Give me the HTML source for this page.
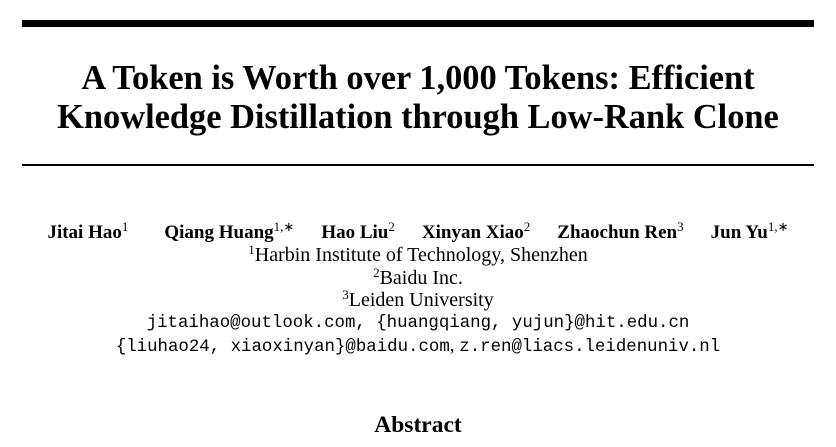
<!DOCTYPE html>
<html><head><meta charset="utf-8"><style>
body{margin:0;width:836px;height:447px;background:#fff;font-family:"Liberation Serif",serif;color:#000;position:relative;overflow:hidden}
.r{position:absolute;left:22px;width:792px;background:#000}
.c{position:absolute;left:0;width:836px;text-align:center;white-space:nowrap}
.t{font-weight:bold;font-size:34.4px;line-height:38px}
.a{font-size:20px;line-height:22px}
.m{font-family:"Liberation Mono",monospace;font-size:17.4px;line-height:22px}
sup{font-size:13px;vertical-align:7px;line-height:0;font-weight:normal}
.g{display:inline-block;width:27px}
</style></head><body>
<div class="r" style="top:20px;height:7px"></div>
<div class="c t" style="top:59px">A Token is Worth over 1,000 Tokens: Efficient</div>
<div class="c t" style="top:98px">Knowledge Distillation through Low-Rank Clone</div>
<div class="r" style="top:164px;height:2px"></div>
<div class="c" style="top:222px;font-weight:bold;font-size:19px;line-height:22px">Jitai Hao<sup>1</sup><span class="g" style="width:36px"></span>Qiang Huang<sup>1,∗</sup><span class="g"></span>Hao Liu<sup>2</sup><span class="g"></span>Xinyan Xiao<sup>2</sup><span class="g"></span>Zhaochun Ren<sup>3</sup><span class="g"></span>Jun Yu<sup>1,∗</sup></div>
<div class="c a" style="top:244px"><sup>1</sup>Harbin Institute of Technology, Shenzhen</div>
<div class="c a" style="top:267px"><sup>2</sup>Baidu Inc.</div>
<div class="c a" style="top:289px"><sup>3</sup>Leiden University</div>
<div class="c m" style="top:313px">jitaihao@outlook.com, {huangqiang, yujun}@hit.edu.cn</div>
<div class="c m" style="top:335px">{liuhao24, xiaoxinyan}@baidu.com<span style="font-family:'Liberation Serif',serif;font-size:19px">, </span>z.ren@liacs.leidenuniv.nl</div>
<div class="c" style="top:412px;font-weight:bold;font-size:23.5px">Abstract</div>
</body></html>
